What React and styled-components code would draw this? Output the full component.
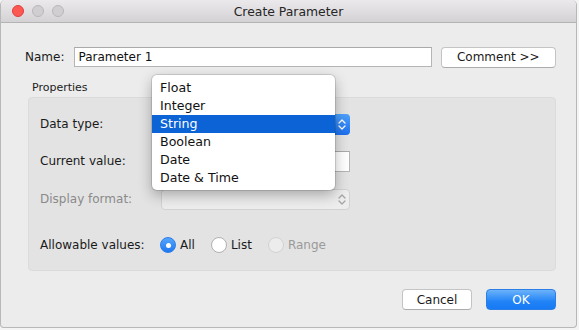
import React from "react";
import styled, { createGlobalStyle, css } from "styled-components";

const Global = createGlobalStyle`
  html, body { margin: 0; padding: 0; background: #f4f4f4; }
  body { font-family: "DejaVu Sans", "Lucida Grande", sans-serif; font-size: 12px; color: #1a1a1a; }
  * { box-sizing: border-box; }
`;

const Window = styled.div`
  width: 577px;
  height: 328px;
  background: #ececec;
  border: 1px solid #b8b8b8;
  border-top: none;
  border-radius: 5px 5px 4px 4px;
  overflow: hidden;
  display: flex;
  flex-direction: column;
`;

const TitleBar = styled.div`
  height: 23px;
  flex: 0 0 23px;
  background: linear-gradient(#ebe9eb, #d4d2d4);
  border-bottom: 1px solid #b4b4b4;
  display: flex;
  align-items: center;
  position: relative;
  padding-left: 11px;
`;

const Lights = styled.div`
  display: flex;
  gap: 8px;
`;

const Light = styled.span`
  width: 12px;
  height: 12px;
  border-radius: 50%;
  background: ${(p) => (p.$red ? "#fc5753" : "#d0ced0")};
  border: 1px solid ${(p) => (p.$red ? "#df3e3a" : "#b9b7b9")};
`;

const Title = styled.div`
  position: absolute;
  left: 0;
  right: 0;
  text-align: center;
  font-size: 12.4px;
  color: #262626;
  pointer-events: none;
`;

const Body = styled.div`
  flex: 1;
  padding: 24px 20px 0 22px;
  display: flex;
  flex-direction: column;
`;

const NameRow = styled.div`
  display: flex;
  align-items: center;
  height: 20px;
`;

const Label = styled.span`
  color: ${(p) => (p.$disabled ? "#8a8a8a" : "#1a1a1a")};
  white-space: nowrap;
`;

const TextField = styled.div`
  height: ${(p) => p.$h || 20}px;
  width: ${(p) => p.$w}px;
  background: #fff;
  border: 1px solid #b5b5b5;
  border-top-color: #a9a9a9;
  display: flex;
  align-items: center;
  padding-left: 3px;
  color: #111;
`;

const Button = styled.button`
  height: 21px;
  width: ${(p) => p.$w}px;
  border-radius: 4px;
  font-family: inherit;
  font-size: 12px;
  padding: 0;
  ${(p) =>
    p.$primary
      ? css`
          background: linear-gradient(#6cb3fa, #2283f6 60%, #177af4);
          border: 1px solid #2a7ee6;
          color: #fff;
        `
      : css`
          background: #fff;
          border: 1px solid #c4c4c4;
          border-bottom-color: #acacac;
          color: #1a1a1a;
        `}
`;

const PropsLabel = styled.div`
  font-size: 11px;
  margin: 14px 0 0 9px;
  height: 14px;
  color: #222;
`;

const Group = styled.div`
  margin: 2px 0 0 5px;
  width: 528px;
  height: 174px;
  background: #e3e3e3;
  border: 1px solid #dbdbdb;
  border-radius: 4px;
  padding: 16px 0 0 11px;
  display: flex;
  flex-direction: column;
`;

const FieldRow = styled.div`
  display: flex;
  align-items: center;
  height: ${(p) => p.$h || 20}px;
  margin-top: ${(p) => p.$mt || 0}px;
`;

const LabelCol = styled.div`
  width: 121px;
  flex: 0 0 121px;
`;

const Control = styled.div`
  position: relative;
`;

const Select = styled.div`
  width: 189px;
  height: 21px;
  border-radius: 4px;
  background: ${(p) => (p.$disabled ? "#ededed" : "#fff")};
  border: 1px solid ${(p) => (p.$disabled ? "#d2d2d2" : "#c2c2c2")};
  position: relative;
  display: flex;
  align-items: center;
  justify-content: flex-end;
`;

const Stepper = styled.div`
  width: 17px;
  height: 21px;
  margin: -1px -1px -1px 0;
  border-radius: 0 4px 4px 0;
  display: flex;
  align-items: center;
  justify-content: center;
  ${(p) =>
    p.$blue
      ? css`
          background: linear-gradient(#4fa2fb, #1b6fef);
        `
      : css`
          background: transparent;
        `}
`;

const Menu = styled.div`
  position: absolute;
  left: -9px;
  top: -39px;
  width: 183px;
  padding: 4px 0 3px;
  background: #fff;
  border-radius: 5px;
  box-shadow: 0 0 0 1px rgba(0, 0, 0, 0.12), 0 5px 14px rgba(0, 0, 0, 0.3);
  z-index: 5;
`;

const MenuItem = styled.div`
  height: 18px;
  line-height: 18px;
  padding-left: 8px;
  font-size: 12.6px;
  color: ${(p) => (p.$active ? "#fff" : "#111")};
  background: ${(p) => (p.$active ? "#0b63d6" : "transparent")};
`;

const RadioGroup = styled.div`
  display: flex;
  align-items: center;
  margin-left: -1px;
`;

const RadioItem = styled.label`
  display: flex;
  align-items: center;
  gap: 4px;
  margin-right: ${(p) => p.$mr || 0}px;
  color: ${(p) => (p.$disabled ? "#9a9a9a" : "#1a1a1a")};
`;

const Radio = styled.span`
  width: 16px;
  height: 16px;
  border-radius: 50%;
  display: flex;
  align-items: center;
  justify-content: center;
  ${(p) =>
    p.$checked
      ? css`
          background: linear-gradient(#55a6fb, #1f77f3);
          border: 1px solid #2a7de8;
        `
      : p.$disabled
      ? css`
          background: #ececec;
          border: 1px solid #d2d2d2;
        `
      : css`
          background: #fff;
          border: 1px solid #b0b0b0;
        `}
`;

const Dot = styled.span`
  width: 5px;
  height: 5px;
  border-radius: 50%;
  background: #fff;
`;

const Footer = styled.div`
  display: flex;
  justify-content: flex-end;
  gap: 14px;
  margin-top: 18px;
`;

const Arrows = ({ color }) => (
  <svg width="8" height="13" viewBox="0 0 8 13">
    <path d="M1 5 L4 2 L7 5 M1 8 L4 11 L7 8" fill="none" stroke={color} strokeWidth="1.3" strokeLinecap="round" strokeLinejoin="round" />
  </svg>
);

const items = ["Float", "Integer", "String", "Boolean", "Date", "Date & Time"];

export default function App() {
  return (
    <>
      <Global />
      <Window>
        <TitleBar>
          <Lights>
            <Light $red />
            <Light />
            <Light />
          </Lights>
          <Title>Create Parameter</Title>
        </TitleBar>
        <Body>
          <NameRow>
            <Label style={{ marginRight: 10, marginLeft: 2 }}>Name:</Label>
            <TextField $w={359}>Parameter 1</TextField>
            <Button $w={116} style={{ marginLeft: 9 }}>Comment &gt;&gt;</Button>
          </NameRow>
          <PropsLabel>Properties</PropsLabel>
          <Group>
            <FieldRow>
              <LabelCol><Label>Data type:</Label></LabelCol>
              <Control>
                <Select>
                  <Stepper $blue><Arrows color="#fff" /></Stepper>
                </Select>
                <Menu>
                  {items.map((it) => (
                    <MenuItem key={it} $active={it === "String"}>{it}</MenuItem>
                  ))}
                </Menu>
              </Control>
            </FieldRow>
            <FieldRow $mt={17}>
              <LabelCol><Label>Current value:</Label></LabelCol>
              <TextField $w={189} $h={21} />
            </FieldRow>
            <FieldRow $mt={18}>
              <LabelCol><Label $disabled>Display format:</Label></LabelCol>
              <Select $disabled>
                <Stepper><Arrows color="#a5a5a5" /></Stepper>
              </Select>
            </FieldRow>
            <FieldRow $mt={26}>
              <LabelCol><Label>Allowable values:</Label></LabelCol>
              <RadioGroup>
                <RadioItem $mr={16}><Radio $checked><Dot /></Radio>All</RadioItem>
                <RadioItem $mr={16}><Radio />List</RadioItem>
                <RadioItem $disabled><Radio $disabled />Range</RadioItem>
              </RadioGroup>
            </FieldRow>
          </Group>
          <Footer>
            <Button $w={70}>Cancel</Button>
            <Button $w={70} $primary>OK</Button>
          </Footer>
        </Body>
      </Window>
    </>
  );
}
